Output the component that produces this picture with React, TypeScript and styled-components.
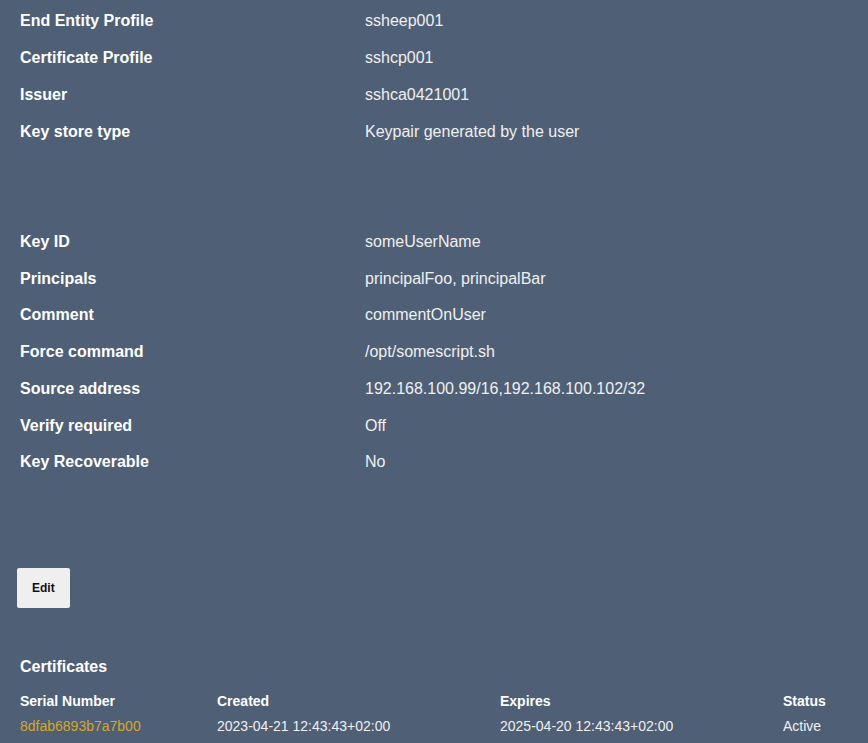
import { createGlobalStyle } from 'styled-components';
import styled from 'styled-components';

const GlobalStyle = createGlobalStyle`
  html, body {
    margin: 0;
    padding: 0;
    background-color: #4f5f76;
  }
  body {
    font-family: 'Liberation Sans', Arial, sans-serif;
    color: #f2f2f2;
  }
`;

type Field = {
  label: string;
  value: string;
}

const profileFields: Field[] = [
  { label: 'End Entity Profile', value: 'ssheep001' },
  { label: 'Certificate Profile', value: 'sshcp001' },
  { label: 'Issuer', value: 'sshca0421001' },
  { label: 'Key store type', value: 'Keypair generated by the user' },
];

const sshFields: Field[] = [
  { label: 'Key ID', value: 'someUserName' },
  { label: 'Principals', value: 'principalFoo, principalBar' },
  { label: 'Comment', value: 'commentOnUser' },
  { label: 'Force command', value: '/opt/somescript.sh' },
  { label: 'Source address', value: '192.168.100.99/16,192.168.100.102/32' },
  { label: 'Verify required', value: 'Off' },
  { label: 'Key Recoverable', value: 'No' },
];

const certificates = [
  {
    serial: '8dfab6893b7a7b00',
    created: '2023-04-21 12:43:43+02:00',
    expires: '2025-04-20 12:43:43+02:00',
    status: 'Active',
  },
];

const FieldList = ({ fields }: { fields: Field[] }): JSX.Element => (
  <FieldTable>
    {fields.map((field) => (
      <FieldRow key={field.label}>
        <FieldLabel>{field.label}</FieldLabel>
        <FieldValue>{field.value}</FieldValue>
      </FieldRow>
    ))}
  </FieldTable>
);

const App = (): JSX.Element => {
  return (
    <PageWrapper>
      <GlobalStyle />
      <FieldList fields={profileFields} />
      <SectionSpacer />
      <FieldList fields={sshFields} />

      <ActionBar>
        <EditButton type='button'>Edit</EditButton>
      </ActionBar>

      <CertificatesSection>
        <SectionTitle>Certificates</SectionTitle>
        <CertGrid>
          <CertHead>Serial Number</CertHead>
          <CertHead>Created</CertHead>
          <CertHead>Expires</CertHead>
          <CertHead>Status</CertHead>
          {certificates.map((cert) => (
            <CertRowCells key={cert.serial}>
              <SerialLink>{cert.serial}</SerialLink>
              <CertCell>{cert.created}</CertCell>
              <CertCell>{cert.expires}</CertCell>
              <CertCell>{cert.status}</CertCell>
            </CertRowCells>
          ))}
        </CertGrid>
      </CertificatesSection>
    </PageWrapper>
  );
}

const PageWrapper = styled.main`
  display: flex;
  flex-direction: column;
  min-height: 743px;
  padding: 3px 0 0 20px;
  box-sizing: border-box;
`;

const FieldTable = styled.div`
  display: flex;
  flex-direction: column;
`;

const FieldRow = styled.div`
  display: grid;
  grid-template-columns: 345px 1fr;
  align-items: center;
  height: 36.75px;
  font-size: 16px;
`;

const FieldLabel = styled.span`
  font-weight: 700;
  color: #ffffff;
`;

const FieldValue = styled.span`
  color: #f0f0f0;
`;

const SectionSpacer = styled.div`
  height: 73.5px;
`;

const ActionBar = styled.div`
  display: flex;
  padding-top: 87px;
  margin-left: -3px;
`;

const EditButton = styled.button`
  height: 40px;
  padding: 0 15px;
  border: none;
  border-radius: 2px;
  background-color: #efefef;
  color: #111111;
  font-family: 'Liberation Sans', Arial, sans-serif;
  font-size: 12px;
  font-weight: 700;
  cursor: pointer;
`;

const CertificatesSection = styled.section`
  display: flex;
  flex-direction: column;
  padding-top: 50px;
`;

const SectionTitle = styled.h2`
  margin: 0 0 17px;
  font-size: 16px;
  font-weight: 700;
  color: #ffffff;
`;

const CertGrid = styled.div`
  display: grid;
  grid-template-columns: 197px 283px 283px 1fr;
  row-gap: 9px;
  font-size: 14px;
`;

const CertRowCells = styled.div`
  display: contents;
`;

const CertHead = styled.span`
  font-weight: 700;
  color: #ffffff;
`;

const CertCell = styled.span`
  color: #f0f0f0;
`;

const SerialLink = styled.a`
  color: #d4a72c;
  text-decoration: none;
  cursor: pointer;
`;

export default App;
